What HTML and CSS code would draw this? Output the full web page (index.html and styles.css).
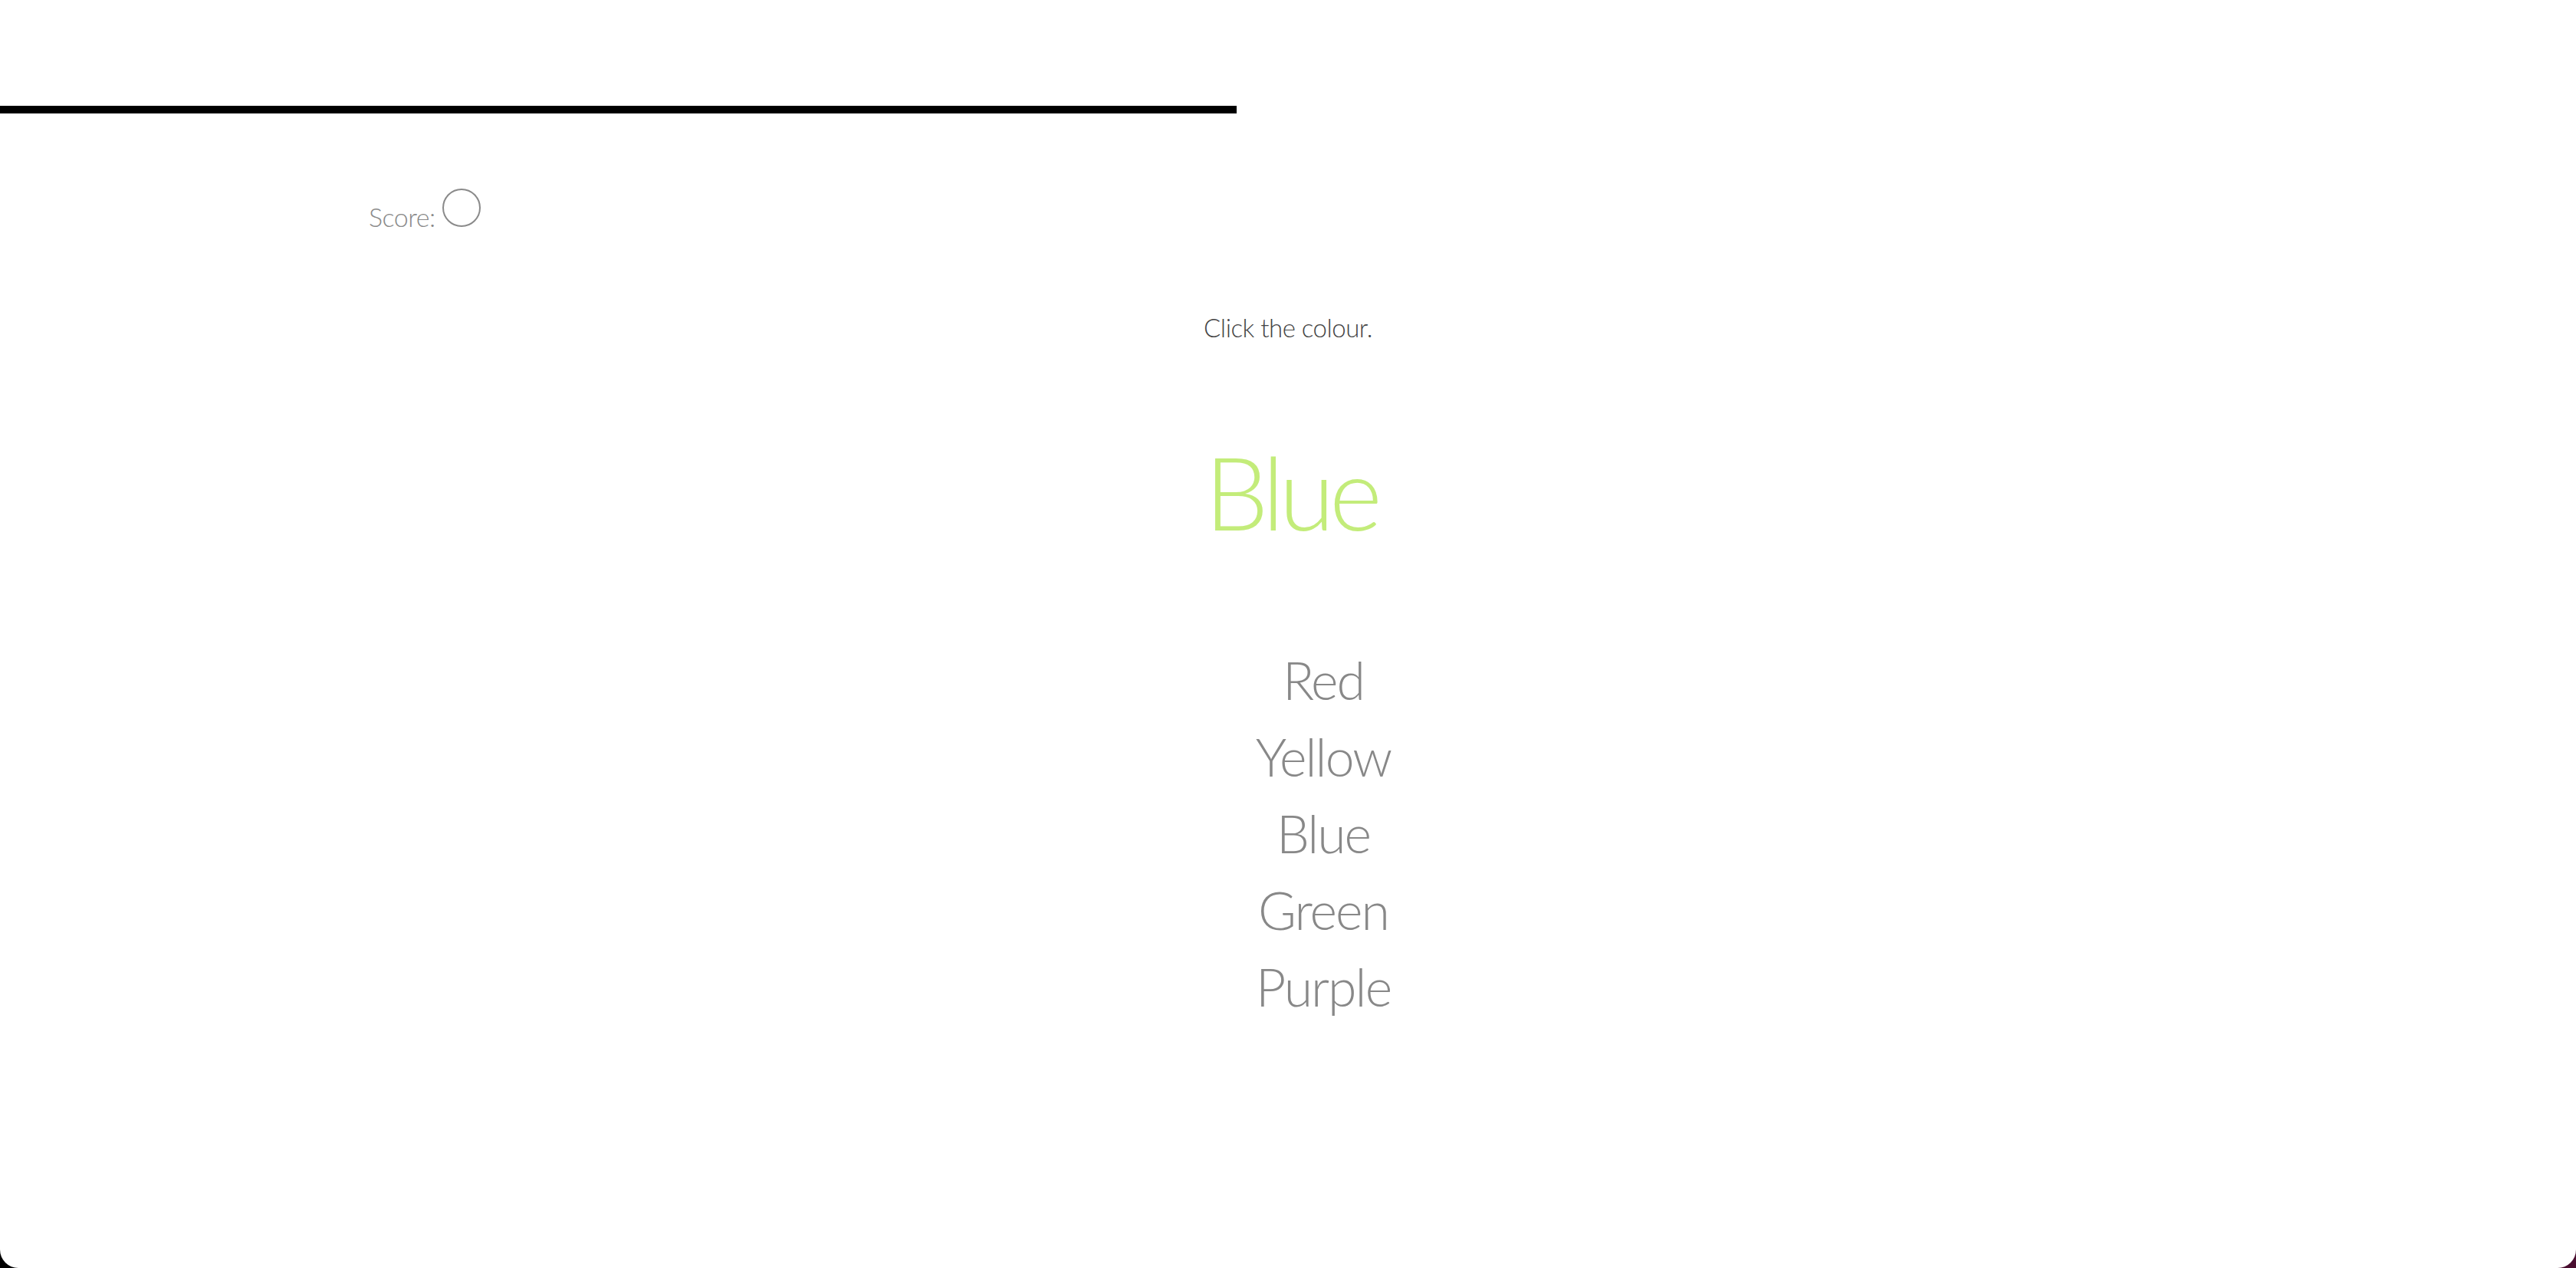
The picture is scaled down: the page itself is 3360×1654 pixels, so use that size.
FILE: index.html
```html
<!DOCTYPE html>
<html lang="en">
<head>
<meta charset="utf-8">
<title>Colour game</title>
<link rel="stylesheet" href="styles.css">
</head>
<body>
<div class="page">
  <div class="progress"></div>
  <div class="score-row">
    <span class="score-label">Score:</span>
    <span class="score-circle"></span>
  </div>
  <main class="game">
    <p class="prompt">Click the colour.</p>
    <h1 class="target">Blue</h1>
    <ul class="options">
      <li>Red</li>
      <li>Yellow</li>
      <li>Blue</li>
      <li>Green</li>
      <li>Purple</li>
    </ul>
  </main>
</div>
</body>
</html>
```

FILE: styles.css
```css
html {
  height: 100%;
  background: linear-gradient(to right, #000 0%, #000 50%, #4a0e30 100%);
}
body {
  margin: 0;
  height: 100%;
  font-family: Lato, "Open Sans", "Liberation Sans", sans-serif;
  font-weight: 300;
}
.page {
  height: 100%;
  box-sizing: border-box;
  background: #fff;
  border-radius: 0 0 24px 24px;
  padding-top: 138px;
  display: flex;
  flex-direction: column;
}
.progress {
  width: 48%;
  height: 10px;
  background: #000;
}
.score-row {
  display: flex;
  align-items: baseline;
  gap: 9px;
  padding-left: 481px;
  margin-top: 98px;
}
.score-label {
  font-size: 34px;
  color: #8a8a8a;
  letter-spacing: -0.5px;
}
.score-circle {
  width: 46px;
  height: 46px;
  border: 2.5px solid #8a8a8a;
  border-radius: 50%;
}
.game {
  display: flex;
  flex-direction: column;
  align-items: center;
}
.prompt {
  margin: 104px 0 0;
  font-size: 33px;
  line-height: 40px;
  color: #444;
  letter-spacing: -0.5px;
}
.target {
  margin: 124px 0 0;
  font-size: 132px;
  line-height: 140px;
  font-weight: 300;
  color: #c3ec7a;
  letter-spacing: -7px;
  padding-left: 7px;
}
.options {
  list-style: none;
  margin: 126px 0 0;
  padding: 0 0 0 92px;
  text-align: center;
}
.options li {
  font-size: 68px;
  line-height: 100px;
  color: #888;
  letter-spacing: -2px;
}
```
